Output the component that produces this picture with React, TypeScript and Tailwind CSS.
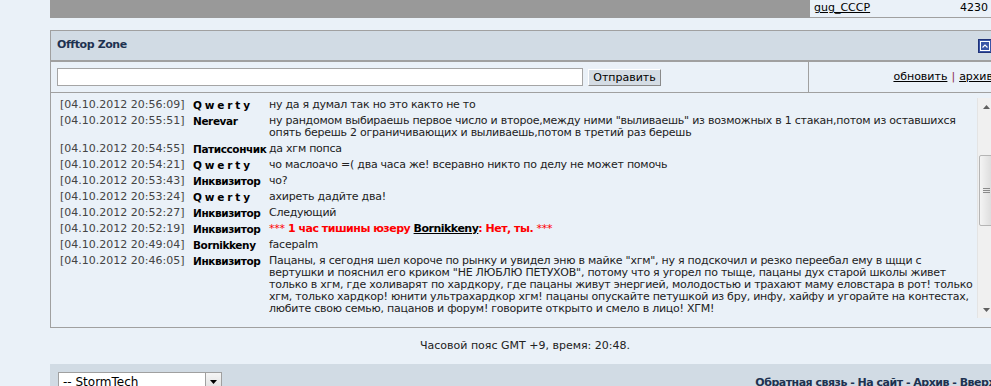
import { ReactNode } from "react";

interface Row {
  time: string;
  name: string;
  msg: ReactNode;
}

const rows: Row[] = [
  { time: "04.10.2012 20:56:09", name: "Q w e r t y", msg: "ну да я думал так но это както не то" },
  {
    time: "04.10.2012 20:55:51",
    name: "Nerevar",
    msg: 'ну рандомом выбираешь первое число и второе,между ними "выливаешь" из возможных в 1 стакан,потом из оставшихся опять берешь 2 ограничивающих и выливаешь,потом в третий раз берешь',
  },
  { time: "04.10.2012 20:54:55", name: "Патиссончик", msg: "да хгм попса" },
  { time: "04.10.2012 20:54:21", name: "Q w e r t y", msg: "чо маслоачо =( два часа же! всеравно никто по делу не может помочь" },
  { time: "04.10.2012 20:53:43", name: "Инквизитор", msg: "чо?" },
  { time: "04.10.2012 20:53:24", name: "Q w e r t y", msg: "ахиреть дадйте два!" },
  { time: "04.10.2012 20:52:27", name: "Инквизитор", msg: "Следующий" },
  {
    time: "04.10.2012 20:52:19",
    name: "Инквизитор",
    msg: (
      <span className="text-[#ff0000]">
        ***{" "}
        <b className="tracking-[-0.5px]">
          1 час тишины юзеру <u className="text-black">Bornikkeny</u>: Нет, ты.
        </b>{" "}
        ***
      </span>
    ),
  },
  { time: "04.10.2012 20:49:04", name: "Bornikkeny", msg: "facepalm" },
  {
    time: "04.10.2012 20:46:05",
    name: "Инквизитор",
    msg: 'Пацаны, я сегодня шел короче по рынку и увидел эню в майке "хгм", ну я подскочил и резко переебал ему в щщи с вертушки и пояснил его криком "НЕ ЛЮБЛЮ ПЕТУХОВ", потому что я угорел по тыще, пацаны дух старой школы живет только в хгм, где холиварят по хардкору, где пацаны живут энергией, молодостью и трахают маму еловстара в рот! только хгм, только хардкор! юнити ультрахардкор хгм! пацаны опускайте петушкой из бру, инфу, хайфу и угорайте на контестах, любите свою семью, пацанов и форум! говорите открыто и смело в лицо! ХГМ!',
  },
];

const Scrollbar = () => (
  <div className="mt-[5px] w-[17px] h-[220px] shrink-0 bg-[#f0f0f0] border-l border-[#e4e4e4] flex flex-col">
    <div className="h-[17px] flex items-center justify-center">
      <svg width="7" height="4" viewBox="0 0 7 4">
        <path d="M0 4 L3.5 0 L7 4 Z" fill="#606060" />
      </svg>
    </div>
    <div className="flex-1 relative">
      <div className="absolute left-[1px] right-[1px] top-[40px] h-[71px] rounded-[2px] border border-[#b5b5b5] bg-gradient-to-r from-[#f4f4f4] to-[#dcdcdc] flex items-center justify-center">
        <svg width="7" height="6" viewBox="0 0 7 6">
          <path d="M0 0.5 H7 M0 2.5 H7 M0 4.5 H7" stroke="#8a8a8a" strokeWidth="1" />
        </svg>
      </div>
    </div>
    <div className="h-[17px] flex items-center justify-center">
      <svg width="7" height="4" viewBox="0 0 7 4">
        <path d="M0 0 L3.5 4 L7 0 Z" fill="#606060" />
      </svg>
    </div>
  </div>
);

export default function App() {
  return (
    <div className="w-[991px] h-[386px] overflow-hidden bg-[#eaf1f8] font-['DejaVu_Sans',Verdana,sans-serif] text-[11px] text-[#222]">
      <div className="ml-[50px] w-[950px]">
        {/* === TOP TABLE */}
        <div className="flex h-[18px]">
          <div className="w-[760px] bg-[#999999]"></div>
          <div className="flex-1 flex items-center justify-between pl-[4px] pr-[12px] border-b border-[#a0a0a0] text-black">
            <u>gug_CCCP</u>
            <span>4230</span>
          </div>
        </div>

        {/* === OFFTOP ZONE */}
        <div className="mt-[12px] border border-[#a0a0a0]">
          <div className="h-[31px] bg-[#d1dbe4] border-b-2 border-[#a0a0a0] flex items-center justify-between pl-[6px] pr-[7px]">
            <b className="text-[#1e3250] tracking-[-0.4px]">Offtop Zone</b>
            <div className="w-[14px] h-[14px] bg-[#3a55a6] border border-[#1f3278] p-[1px]">
              <div className="w-full h-full border border-white flex items-center justify-center">
                <svg width="6" height="4" viewBox="0 0 6 4">
                  <path d="M0.5 3.5 L3 1 L5.5 3.5" stroke="white" strokeWidth="1.2" fill="none" />
                </svg>
              </div>
            </div>
          </div>

          <div className="h-[31px] flex border-b border-[#a0a0a0]">
            <div className="w-[757px] flex items-center pl-[6px] gap-[5px]">
              <input className="w-[526px] h-[18px] bg-white border border-[#a5a5a5] outline-none" />
              <button className="w-[73px] h-[17px] mt-[1px] bg-[#d4dce4] border border-t-white border-l-white border-r-[#8a8a8a] border-b-[#8a8a8a] text-[11px] text-black leading-none">
                Отправить
              </button>
            </div>
            <div className="flex-1 border-l border-[#a0a0a0] flex items-center justify-end pr-[6px] text-black">
              <u>обновить</u>
              <span className="text-[#8b2f3f] px-[4px]">|</span>
              <u>архив</u>
            </div>
          </div>

          <div className="h-[234px] flex items-start pl-[9px]">
            <div className="w-[917px] pt-[4px]">
              {rows.map((r) => (
                <div key={r.time} className="grid grid-cols-[133px_76px_1fr] py-[2px] leading-[12px]">
                  <span className="text-[#444]">[{r.time}]</span>
                  <b className="text-black whitespace-nowrap text-[10.5px] tracking-[-0.4px]">{r.name}</b>
                  <span className="pr-[2px] tracking-[-0.25px]">{r.msg}</span>
                </div>
              ))}
            </div>
            <Scrollbar />
          </div>
        </div>

        {/* === TIMEZONE */}
        <div className="h-[36px] flex items-center justify-center text-[11px] text-[#222]">
          Часовой пояс GMT +9, время: 20:48.
        </div>

        {/* === FOOTER */}
        <div className="h-[30px] bg-[#d1dbe4] flex justify-between items-start pl-[8px] pr-[5px] pt-[8px]">
          <div className="w-[164px] h-[19px] bg-white border border-[#a0a0a0] flex items-center justify-between">
            <span className="pl-[4px] text-[12px] text-black">-- StormTech</span>
            <div className="w-[16px] h-full border-l border-[#a0a0a0] bg-gradient-to-b from-[#f6f6f6] to-[#dedede] flex items-center justify-center">
              <svg width="7" height="4" viewBox="0 0 7 4">
                <path d="M0 0 L3.5 4 L7 0 Z" fill="#000" />
              </svg>
            </div>
          </div>
          <div className="pt-[3px] font-bold text-[#1e3250] tracking-[-0.5px]">
            <u>Обратная связь</u> - <u>На сайт</u> - <u>Архив</u> - <u>Вверх</u>
          </div>
        </div>
      </div>
    </div>
  );
}
